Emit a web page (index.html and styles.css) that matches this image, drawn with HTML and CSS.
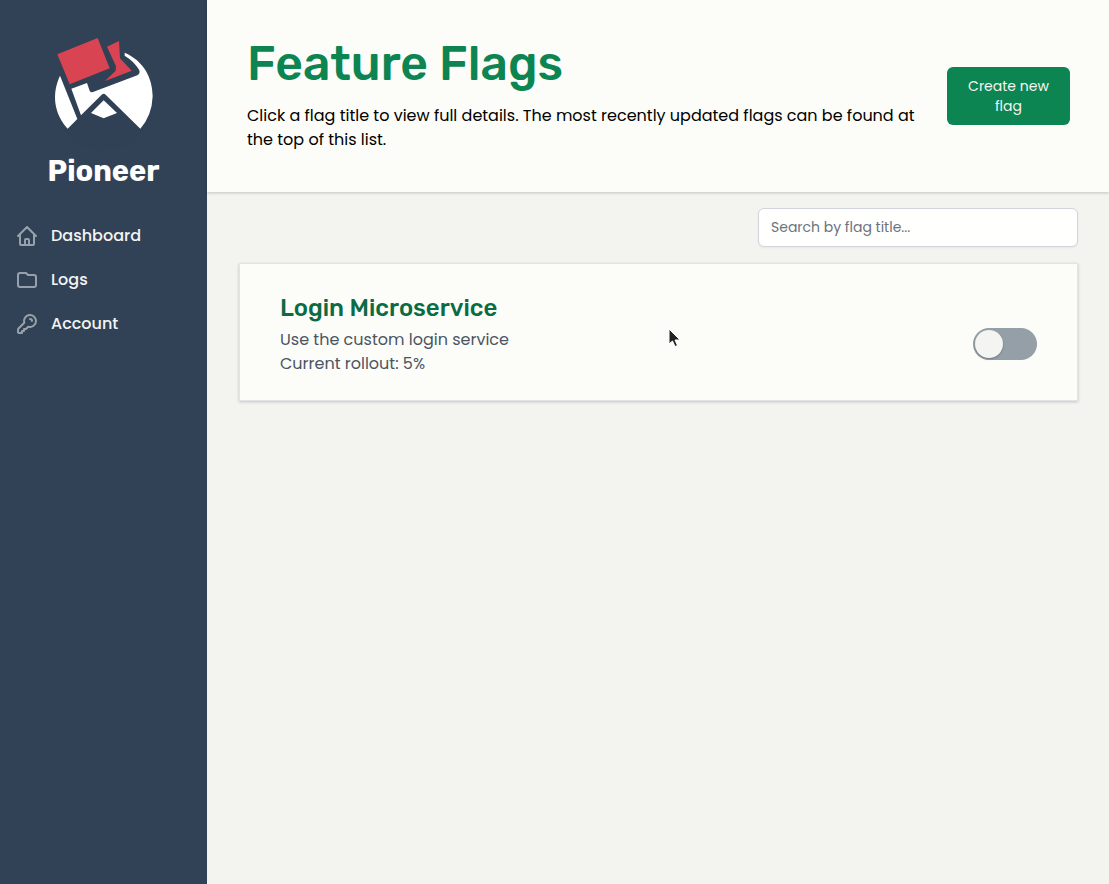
FILE: index.html
```html
<!DOCTYPE html>
<html lang="en">
<head>
<meta charset="utf-8">
<meta name="viewport" content="width=device-width, initial-scale=1">
<title>Pioneer</title>
<link rel="stylesheet" href="styles.css">
</head>
<body>
<div class="app">
  <aside class="sidebar">
    <div class="brand">
      <svg class="brand-logo" viewBox="24 21 336 360" aria-hidden="true">
        <circle cx="191" cy="225" r="150" fill="#304156"/>
        <path fill="#fff" d="M60 152 L112 282 L83 311 C42 267 34 207 60 152Z"/>
        <path fill="#fff" d="M94 191 L141 174 L149 197 Q152 203 159 201 L292 151 Q301 146 298 136 Q284 110 254 92 L254 83 C310 107 338 158 338 214 Q336 272 301 311 L197 209 Q191 204 185 209 L123 271Z"/>
        <path fill="#fff" d="M191 226 L231 264 L191 280 L153 264Z"/>
        <path fill="#d94452" d="M52 88 L173 39 L209 130 L89 178Z"/>
        <path fill="#d94452" d="M201 65 L237 48 L240 100 L275 137 L195 168 L227 137 L228 124Z"/>
      </svg>
      <span class="brand-name">Pioneer</span>
    </div>
    <nav class="nav">
      <a class="nav-link" href="#dashboard">
        <svg class="nav-icon" viewBox="0 0 24 24" aria-hidden="true"><path d="M3 12l2-2m0 0l7-7 7 7M5 10v10a1 1 0 001 1h3m10-11l2 2m-2-2v10a1 1 0 01-1 1h-3m-6 0a1 1 0 001-1v-4a1 1 0 011-1h2a1 1 0 011 1v4a1 1 0 001 1m-6 0h6"/></svg>
        Dashboard
      </a>
      <a class="nav-link" href="#logs">
        <svg class="nav-icon" viewBox="0 0 24 24" aria-hidden="true"><path d="M3 7v10a2 2 0 002 2h14a2 2 0 002-2V9a2 2 0 00-2-2h-6l-2-2H5a2 2 0 00-2 2z"/></svg>
        Logs
      </a>
      <a class="nav-link" href="#account">
        <svg class="nav-icon" viewBox="0 0 24 24" aria-hidden="true"><path d="M15 7a2 2 0 012 2m4 0a6 6 0 01-7.743 5.743L11 17H9v2H7v2H4a1 1 0 01-1-1v-2.586a1 1 0 01.293-.707l5.964-5.964A6 6 0 1121 9z"/></svg>
        Account
      </a>
    </nav>
  </aside>
  <div class="page">
    <header class="page-header">
      <div class="page-intro">
        <h1 class="page-title">Feature Flags</h1>
        <p class="page-text">Click a flag title to view full details. The most recently updated flags can be found at the top of this list.</p>
      </div>
      <button class="create-button" type="button">Create new flag</button>
    </header>
    <main class="content">
      <input class="search" type="search" aria-label="Search by flag title" placeholder="Search by flag title...">
      <article class="flag">
        <h2 class="flag-title"><a class="flag-link" href="#login-microservice" id="flag-name">Login Microservice</a></h2>
        <div class="flag-details">
          <p class="flag-text">Use the custom login service</p>
          <p class="flag-text">Current rollout: 5%</p>
        </div>
        <input class="toggle" type="checkbox" role="switch" aria-labelledby="flag-name">
      </article>
    </main>
  </div>
</div>
<svg class="pointer" viewBox="0 0 14 21" aria-hidden="true"><path d="M1 1V16L4.500 13L7 18.500L9.500 17.500L7 12H12Z" fill="#222" stroke="#fff" stroke-width="1"/></svg>
</body>
</html>
```
FILE: styles.css
```css
*, *::before { box-sizing: border-box; }

body {
  margin: 0;
  font-family: Poppins, Inter, "Open Sans", sans-serif;
  font-size: 16px;
  line-height: 24px;
  color: #000;
  background: #f3f4f0;
}

h1, h2, p { margin: 0; }

.app { display: flex; min-height: 100vh; }

.sidebar {
  flex: 0 0 207px;
  padding-top: 32px;
  background: #324256;
}

.brand { display: flex; flex-direction: column; align-items: center; }
.brand-logo { width: 112px; height: 120px; }
.brand-name {
  font-family: Rubik, Inter, sans-serif;
  font-size: 29px;
  line-height: 38px;
  font-weight: 700;
  color: #fff;
}

.nav { display: flex; flex-direction: column; gap: 4px; padding: 26px 8px; }
.nav-link {
  display: flex;
  align-items: center;
  gap: 12px;
  padding: 8px 8px 8px 7px;
  font-weight: 500;
  color: #f4f4f1;
  text-decoration: none;
}
.nav-icon {
  width: 24px;
  height: 24px;
  fill: none;
  stroke: #98a1ab;
  stroke-width: 2;
  stroke-linecap: round;
  stroke-linejoin: round;
}

.page { flex: 1; min-width: 0; }

.page-header {
  display: flex;
  align-items: center;
  justify-content: space-between;
  gap: 24px;
  padding: 40px 39px 40px 40px;
  background: #fcfdf8;
  box-shadow: 0 1px 3px rgba(0, 0, 0, 0.2);
}
.page-intro { display: grid; gap: 16px; }
.page-title {
  font-family: Rubik, Inter, sans-serif;
  font-size: 48px;
  line-height: 48px;
  font-weight: 500;
  color: #0c8552;
}

.create-button {
  flex: 0 0 123px;
  padding: 8px 16px;
  border: 1px solid transparent;
  border-radius: 6px;
  font: inherit;
  font-size: 14px;
  line-height: 20px;
  color: #f4f4f1;
  background: #0c8552;
}

.content {
  display: flex;
  flex-direction: column;
  gap: 16px;
  padding: 16px 31px 16px 32px;
}

.search {
  align-self: flex-end;
  width: 320px;
  max-width: 100%;
  height: 39px;
  padding: 8px 12px;
  border: 1px solid #d1d5db;
  border-radius: 6px;
  font: inherit;
  font-size: 14px;
  line-height: 20px;
  color: #000;
  background: #fffffd;
  box-shadow: 0 1px 2px rgba(0, 0, 0, 0.05);
}
.search::placeholder { color: #6b7280; }

.flag {
  display: grid;
  grid-template-columns: 1fr auto;
  align-items: start;
  padding: 24px 40px;
  border: 1px solid #e2e4e6;
  background: #fcfdf8;
  box-shadow: 0 1px 3px rgba(0, 0, 0, 0.2);
}
.flag-title {
  grid-column: 1 / -1;
  font-family: Rubik, Inter, sans-serif;
  font-size: 24px;
  line-height: 40px;
  font-weight: 500;
}
.flag-link { color: #0b6b44; text-decoration: none; }
.flag-text { color: #4b5563; }

.toggle {
  appearance: none;
  width: 64px;
  height: 32px;
  margin: 0;
  padding: 2px;
  border-radius: 16px;
  background: #959fa8;
}
.toggle::before {
  content: "";
  display: block;
  width: 28px;
  height: 28px;
  border-radius: 50%;
  background: #f4f4f1;
  box-shadow: 0 1px 2px rgba(0, 0, 0, 0.25);
}
.toggle:checked { background: #0c8552; }
.toggle:checked::before { margin-left: auto; }

.pointer {
  position: absolute;
  left: 668px;
  top: 328px;
  width: 14px;
  height: 21px;
  pointer-events: none;
}
```
